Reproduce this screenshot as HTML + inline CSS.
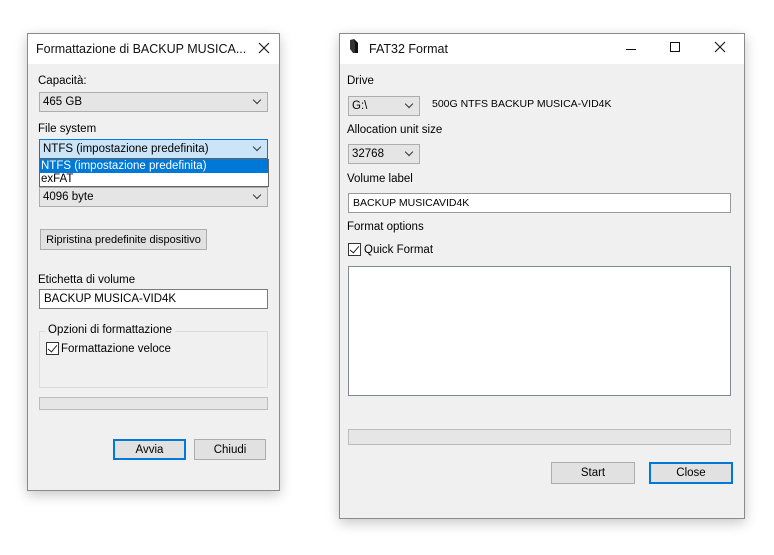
<!DOCTYPE html>
<html><head><meta charset="utf-8"><style>
*{box-sizing:border-box;margin:0;padding:0}
body{width:774px;height:555px;background:#fff;position:relative;overflow:hidden;font-family:"Liberation Sans",sans-serif;font-size:11.5px;color:#000}
.a{position:absolute}
.win{position:absolute;background:#f0f0f0;border:1px solid #8a8a8a;box-shadow:0 4px 12px rgba(0,0,0,.22)}
.tb{position:absolute;left:0;right:0;top:0;height:30px;background:#fff}
.t{position:absolute;white-space:nowrap;line-height:14px}
.combo{position:absolute;background:#e5e5e5;border:1px solid #adadad;height:20px;padding-left:3px;line-height:18px;white-space:nowrap}
.combo:after{content:"";position:absolute;right:7px;top:4px;width:5px;height:5px;border-right:1px solid #333;border-bottom:1px solid #333;transform:rotate(45deg)}
.edit{position:absolute;background:#fff;border:1px solid #7a7a7a;height:20px;padding-left:4px;line-height:18px}
.btn{position:absolute;background:#e1e1e1;border:1px solid #adadad;text-align:center;line-height:20px;white-space:nowrap}
.btn.def{border:2px solid #0078d7;line-height:18px}
.prog{position:absolute;background:#e6e6e6;border:1px solid #bcbcbc}
.cb{position:absolute;width:13px;height:13px;border:1px solid #333;background:#fff}
.cb:after{content:"";position:absolute;left:3px;top:0px;width:4px;height:8px;border-right:1.5px solid #222;border-bottom:1.5px solid #222;transform:rotate(40deg)}
</style></head><body>

<div class="win" style="left:27px;top:33px;width:253px;height:458px">
 <div class="tb"></div>
 <div class="t" style="left:8px;top:8px;font-size:12.5px;color:#111">Formattazione di BACKUP MUSICA...</div>
 <svg class="a" style="left:230px;top:8px" width="12" height="12"><path d="M1 1L11 11M11 1L1 11" stroke="#111" stroke-width="1.1"/></svg>
 <div class="t" style="left:10px;top:40px">Capacità:</div>
 <div class="combo" style="left:11px;top:58px;width:229px">465 GB</div>
 <div class="t" style="left:10px;top:88px">File system</div>
 <div class="combo" style="left:11px;top:105px;width:229px;background:#cce4f7;border-color:#0078d7">NTFS (impostazione predefinita)</div>
 <div class="combo" style="left:11px;top:153px;width:229px">4096 byte</div>
 <div class="a" style="left:11px;top:125px;width:230px;height:28px;background:#fff;border:1px solid #646464">
  <div style="height:13px;background:#0078d7;color:#fff;line-height:13px;padding-left:1px">NTFS (impostazione predefinita)</div>
  <div style="line-height:13px;padding-left:1px">exFAT</div>
 </div>
 <div class="btn" style="left:12px;top:195px;width:167px;height:21px;font-size:11px">Ripristina predefinite dispositivo</div>
 <div class="t" style="left:10px;top:239px">Etichetta di volume</div>
 <div class="edit" style="left:11px;top:255px;width:229px">BACKUP MUSICA-VID4K</div>
 <div class="a" style="left:11px;top:297px;width:229px;height:57px;border:1px solid #dcdcdc"></div>
 <div class="t" style="left:17px;top:289px;background:#f0f0f0;padding:0 3px">Opzioni di formattazione</div>
 <div class="cb" style="left:18px;top:308px"></div>
 <div class="t" style="left:33px;top:308px">Formattazione veloce</div>
 <div class="prog" style="left:11px;top:363px;width:229px;height:13px"></div>
 <div class="btn def" style="left:85px;top:405px;width:73px;height:21px">Avvia</div>
 <div class="btn" style="left:166px;top:405px;width:72px;height:21px">Chiudi</div>
</div>

<div class="win" style="left:339px;top:33px;width:406px;height:486px">
 <div class="tb"></div>
 <svg class="a" style="left:9px;top:5px" width="10" height="15"><path d="M1 1L5 0L9 4L9 14L4 14L1 10Z" fill="#333"/><path d="M5 0L9 4L9 14L6 14L6 5Z" fill="#111"/></svg>
 <div class="t" style="left:29px;top:8px;font-size:12.5px;color:#111">FAT32 Format</div>
 <div class="a" style="left:286px;top:15px;width:10px;border-top:1px solid #111"></div>
 <div class="a" style="left:330px;top:8px;width:10px;height:10px;border:1px solid #111"></div>
 <svg class="a" style="left:374px;top:7px" width="12" height="12"><path d="M1 1L11 11M11 1L1 11" stroke="#111" stroke-width="1.1"/></svg>
 <div class="t" style="left:7px;top:40px">Drive</div>
 <div class="combo" style="left:8px;top:62px;width:72px">G:\</div>
 <div class="t" style="left:92px;top:63px;font-size:10.5px">500G NTFS BACKUP MUSICA-VID4K</div>
 <div class="t" style="left:7px;top:89px">Allocation unit size</div>
 <div class="combo" style="left:8px;top:110px;width:72px">32768</div>
 <div class="t" style="left:7px;top:138px">Volume label</div>
 <div class="edit" style="left:8px;top:159px;width:383px;border-color:#999;font-size:10.5px">BACKUP MUSICAVID4K</div>
 <div class="t" style="left:7px;top:186px">Format options</div>
 <div class="cb" style="left:8px;top:209px"></div>
 <div class="t" style="left:24px;top:209px">Quick Format</div>
 <div class="a" style="left:8px;top:232px;width:383px;height:130px;background:#fff;border:1px solid #828790"></div>
 <div class="prog" style="left:8px;top:395px;width:383px;height:16px"></div>
 <div class="btn" style="left:211px;top:428px;width:84px;height:22px;line-height:21px">Start</div>
 <div class="btn def" style="left:309px;top:428px;width:84px;height:22px;line-height:19px">Close</div>
</div>
</body></html>
